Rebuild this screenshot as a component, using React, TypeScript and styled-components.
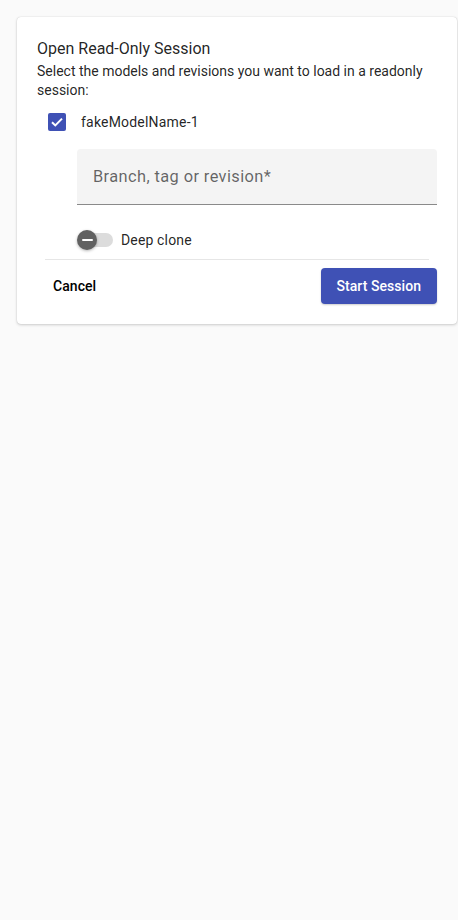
import React from "react";
import styled, { createGlobalStyle } from "styled-components";

const Global = createGlobalStyle`
  html, body { margin: 0; padding: 0; background: #fafafa; }
  body { font-family: Roboto, "Liberation Sans", Arial, sans-serif; color: rgba(0,0,0,0.87); }
  * { box-sizing: border-box; }
`;

const Page = styled.div`
  padding: 17px 1px 0 17px;
  min-height: 920px;
  background: #fafafa;
`;

const Card = styled.div`
  background: #fff;
  border-radius: 4px;
  box-shadow: 0 1px 3px rgba(0,0,0,0.18), 0 0 1px rgba(0,0,0,0.2);
  padding: 20px 20px 20px 20px;
  display: flex;
  flex-direction: column;
`;

const Title = styled.h2`
  margin: 0;
  font-size: 16px;
  font-weight: 400;
  line-height: 24px;
  color: rgba(0,0,0,0.87);
`;

const Subtitle = styled.p`
  margin: 1px 0 0 0;
  font-size: 14px;
  line-height: 19px;
  color: rgba(0,0,0,0.87);
`;

const CheckRow = styled.label`
  display: flex;
  align-items: center;
  height: 24px;
  margin-top: 10px;
  padding-left: 11px;
  gap: 15px;
  font-size: 14px;
  letter-spacing: 0.2px;
  color: rgba(0,0,0,0.87);
`;

const CheckBox = styled.span`
  width: 18px;
  height: 18px;
  border-radius: 2px;
  background: #3f51b5;
  display: flex;
  align-items: center;
  justify-content: center;
`;

const Nested = styled.div`
  padding-left: 40px;
  display: flex;
  flex-direction: column;
`;

const Field = styled.div`
  margin-top: 15px;
  height: 56px;
  background: #f4f4f4;
  border-radius: 4px 4px 0 0;
  border-bottom: 1px solid #8a8a8a;
  display: flex;
  align-items: center;
  padding: 0 16px;
  font-size: 16.4px;
  letter-spacing: 0.4px;
  color: rgba(0,0,0,0.6);
`;

const SwitchRow = styled.div`
  display: flex;
  align-items: center;
  height: 24px;
  margin-top: 23px;
  gap: 8px;
  font-size: 14px;
  letter-spacing: 0.15px;
  color: rgba(0,0,0,0.87);
`;

const Switch = styled.span`
  position: relative;
  width: 36px;
  height: 20px;
  display: inline-block;
`;

const Track = styled.span`
  position: absolute;
  left: 2px;
  right: 0;
  top: 3px;
  height: 14px;
  border-radius: 7px;
  background: #dcdcdc;
`;

const Thumb = styled.span`
  position: absolute;
  left: 0;
  top: 0;
  width: 20px;
  height: 20px;
  border-radius: 50%;
  background: #616161;
  box-shadow: 0 1px 3px rgba(0,0,0,0.3);
  display: flex;
  align-items: center;
  justify-content: center;
  &::after {
    content: "";
    width: 11px;
    height: 2px;
    border-radius: 1px;
    background: #fff;
  }
`;

const Divider = styled.hr`
  margin: 7px 8px 0 8px;
  border: none;
  border-top: 1px solid #e6e6e6;
  height: 0;
`;

const Actions = styled.div`
  margin-top: 8px;
  margin-left: 8px;
  display: flex;
  justify-content: space-between;
  align-items: center;
`;

const Button = styled.button<{ $primary?: boolean }>`
  height: 36px;
  padding: 0 ${(p) => (p.$primary ? "16px" : "8px")};
  border: none;
  border-radius: 4px;
  font-family: Roboto, "Liberation Sans", Arial, sans-serif;
  font-size: 14px;
  font-weight: 500;
  letter-spacing: 0.05px;
  background: ${(p) => (p.$primary ? "#3f51b5" : "transparent")};
  color: ${(p) => (p.$primary ? "#fff" : "#000")};
  box-shadow: ${(p) => (p.$primary ? "0 1px 2px rgba(0,0,0,0.2)" : "none")};
  cursor: pointer;
`;

export default function App() {
  return (
    <Page>
      <Global />
      <Card>
        <Title>Open Read-Only Session</Title>
        <Subtitle>Select the models and revisions you want to load in a readonly session:</Subtitle>
        <CheckRow>
          <CheckBox>
            <svg width="14" height="14" viewBox="0 0 14 14">
              <path d="M2 7.2 L5.3 10.4 L12 3.6" fill="none" stroke="#fff" strokeWidth="2" />
            </svg>
          </CheckBox>
          fakeModelName-1
        </CheckRow>
        <Nested>
          <Field>Branch, tag or revision*</Field>
          <SwitchRow>
            <Switch>
              <Track />
              <Thumb />
            </Switch>
            Deep clone
          </SwitchRow>
        </Nested>
        <Divider />
        <Actions>
          <Button>Cancel</Button>
          <Button $primary>Start Session</Button>
        </Actions>
      </Card>
    </Page>
  );
}
